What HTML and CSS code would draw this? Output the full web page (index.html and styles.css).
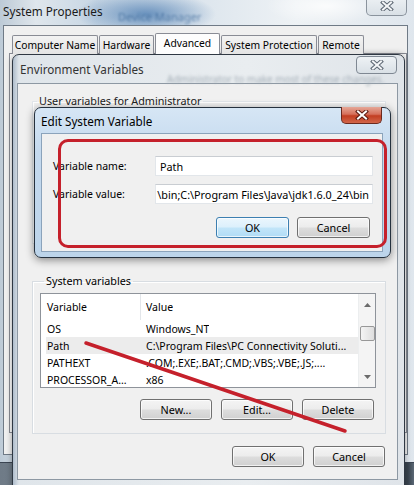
FILE: index.html
```html
<!DOCTYPE html>
<html>
<head>
<meta charset="utf-8">
<link rel="stylesheet" href="styles.css">
</head>
<body>
<div class="desktop">
  <div class="win win-sys">
    <div class="titlebar">
      <span class="blur-text blur-dm">Device Manager</span>
      <span class="title">System Properties</span>
      <span class="close close-sys">
        <svg width="14" height="10" viewBox="0 0 14 10"><path d="M3 1.5 L11 8.5 M11 1.5 L3 8.5" stroke="#5d6773" stroke-width="4" stroke-linecap="square"/><path d="M3 1.5 L11 8.5 M11 1.5 L3 8.5" stroke="#f4f6f8" stroke-width="2" stroke-linecap="square"/></svg>
      </span>
    </div>
    <div class="client sys-client">
      <div class="tabs">
        <div class="tab t1">Computer Name</div>
        <div class="tab t2">Hardware</div>
        <div class="tab t3 active">Advanced</div>
        <div class="tab t4">System Protection</div>
        <div class="tab t5">Remote</div>
      </div>
      <div class="tabpage"></div>
    </div>
  </div>

  <div class="win win-env">
    <div class="titlebar">
      <span class="title">Environment Variables</span>
      <span class="blur-text blur-admin">Administrator to make most of these changes.</span>
      <span class="close close-env">
        <svg width="14" height="10" viewBox="0 0 14 10"><path d="M3 1.5 L11 8.5 M11 1.5 L3 8.5" stroke="#5d6773" stroke-width="4" stroke-linecap="square"/><path d="M3 1.5 L11 8.5 M11 1.5 L3 8.5" stroke="#f4f6f8" stroke-width="2" stroke-linecap="square"/></svg>
      </span>
    </div>
    <div class="client env-client">
      <fieldset class="group group-user">
        <legend>User variables for Administrator</legend>
      </fieldset>
      <fieldset class="group group-sys">
        <legend>System variables</legend>
        <div class="listbox">
          <div class="list-main">
            <div class="lrow lhead"><span class="c1">Variable</span><span class="c2">Value</span></div>
            <div class="lrow"><span class="c1">OS</span><span class="c2">Windows_NT</span></div>
            <div class="lrow sel"><span class="c1">Path</span><span class="c2">C:\Program Files\PC Connectivity Soluti...</span></div>
            <div class="lrow"><span class="c1">PATHEXT</span><span class="c2">.COM;.EXE;.BAT;.CMD;.VBS;.VBE;.JS;....</span></div>
            <div class="lrow"><span class="c1">PROCESSOR_A...</span><span class="c2">x86</span></div>
          </div>
          <div class="vscroll">
            <svg class="arrow" width="7" height="4" viewBox="0 0 7 4"><path d="M0 4 L3.5 0 L7 4 Z" fill="#6b6b6b"/></svg>
            <div class="thumb"></div>
            <svg class="arrow arrow-down" width="7" height="4" viewBox="0 0 7 4"><path d="M0 0 L3.5 4 L7 0 Z" fill="#6b6b6b"/></svg>
          </div>
        </div>
        <div class="btnrow">
          <div class="btn">New...</div>
          <div class="btn">Edit...</div>
          <div class="btn">Delete</div>
        </div>
      </fieldset>
      <div class="btnrow dlg-btns">
        <div class="btn">OK</div>
        <div class="btn">Cancel</div>
      </div>
    </div>
  </div>

  <div class="win win-edit">
    <div class="titlebar">
      <span class="title">Edit System Variable</span>
      <span class="close close-red">
        <svg width="14" height="10" viewBox="0 0 14 10"><path d="M3 1.5 L11 8.5 M11 1.5 L3 8.5" stroke="#5a1a12" stroke-width="4" stroke-linecap="square"/><path d="M3 1.5 L11 8.5 M11 1.5 L3 8.5" stroke="#ffffff" stroke-width="2" stroke-linecap="square"/></svg>
      </span>
    </div>
    <div class="client edit-client">
      <div class="form">
        <label class="lbl">Variable name:</label>
        <div class="field">Path</div>
        <label class="lbl">Variable value:</label>
        <div class="field field-value"><span>\bin;C:\Program Files\Java\jdk1.6.0_24\bin</span></div>
      </div>
      <div class="btnrow edit-btns">
        <div class="btn btn-default">OK</div>
        <div class="btn">Cancel</div>
      </div>
    </div>
  </div>

  <div class="annot-rect"></div>
  <svg class="annot-line" width="414" height="485" viewBox="0 0 414 485">
    <line x1="86" y1="343" x2="345" y2="431" stroke="#c5202b" stroke-width="3.5" stroke-linecap="round"/>
  </svg>
</div>
</body>
</html>
```

FILE: styles.css
```css
* { box-sizing: border-box; }
html, body { margin: 0; padding: 0; }
body {
  font-family: "Noto Sans", "Open Sans", sans-serif;
  font-size: 10.5px;
  color: #000;
}
.desktop {
  position: relative;
  width: 414px;
  height: 485px;
  overflow: hidden;
  background: linear-gradient(90deg, #6f7b87 0px, #76828e 85px, #5aa96a 85px, #62b070 280px, #7b8691 280px, #39444f 408px, #5b6875 414px);
}

/* generic window */
.win {
  position: absolute;
  display: flex;
  flex-direction: column;
  border: 1px solid #3b4552;
  border-radius: 7px 7px 0 0;
}
.titlebar {
  display: flex;
  align-items: center;
  position: relative;
  flex: none;
}
.title {
  font-family: "Noto Sans", "Open Sans", sans-serif;
  font-size: 11.7px;
  color: #000;
  white-space: nowrap;
  position: relative;
}
.close {
  margin-left: auto;
  align-self: flex-start;
  display: flex;
  align-items: center;
  justify-content: center;
  width: 41px;
  border: 1px solid #7f8893;
  border-top: none;
  border-radius: 0 0 5px 5px;
  background: linear-gradient(#eef2f5, #d9e0e6);
}
.blur-text {
  position: absolute;
  white-space: nowrap;
  filter: blur(1.2px);
  pointer-events: none;
}
.client {
  border: 1px solid #7d8893;
  background: #f0f0f0;
  flex: 1;
}

/* System properties */
.win-sys {
  left: -5px;
  top: -5px;
  width: 421px;
  height: 468px;
  padding: 0 7px 7px 7px;
  background:
    radial-gradient(ellipse 70px 22px at 150px 18px, rgba(70,120,175,0.75), rgba(70,120,175,0) 100%),
    radial-gradient(ellipse 60px 18px at 330px 10px, rgba(255,255,255,0.8), rgba(255,255,255,0) 100%),
    linear-gradient(90deg, #b9c7d4 0px, #dfe6ec 40px, #c7d6e4 100px, #dce5ed 200px, #eef2f5 300px, #dfe6ed 420px);
}
.win-sys .titlebar { height: 29px; }
.win-sys .title { color: #1a1a1a; top: 0; }
.blur-dm { left: 115px; top: 13px; font-size: 11px; color: #3e6a9a; opacity: 0.7; }
.close-sys { height: 20px; margin-right: 1px; border-color: #8a939d; }
.sys-client { border-color: #6f7a86; }
.tabs {
  display: flex;
  align-items: flex-end;
  gap: 1px;
  margin: 7px 0 0 8px;
  height: 21px;
  position: relative;
  z-index: 1;
}
.tab {
  height: 19px;
  border: 1px solid #898c95;
  border-bottom: none;
  border-radius: 2px 2px 0 0;
  background: linear-gradient(#f3f3f3, #e4e4e4);
  display: flex;
  align-items: center;
  justify-content: center;
  white-space: nowrap;
  font-size: 10.3px;
}
.tab.active {
  height: 21px;
  background: #fdfdfd;
  padding-bottom: 3px;
}
.t1 { width: 86px; }
.t2 { width: 55px; }
.t3 { width: 65px; }
.t4 { width: 96px; }
.t5 { width: 46px; }
.tabpage {
  margin: -1px 0 0 5px;
  height: 380px;
  border: 1px solid #898c95;
  background: #fcfcfc;
}

/* Environment variables */
.win-env {
  left: 12px;
  top: 54px;
  width: 393px;
  height: 440px;
  padding: 0 6px 6px 4px;
  border-color: #2f3843;
  background:
    linear-gradient(90deg, #aebccb 0px, #dfe5ea 6px, #e9edf0 60%, #dfe4e9 100%);
  box-shadow: 0 0 6px rgba(0,0,0,0.35);
}
.win-env .titlebar { height: 28px; }
.win-env .title { left: 3px; color: #333; }
.blur-admin { left: 150px; top: 17px; font-size: 10px; color: #a3adb6; filter: blur(1.4px); }
.close-env { height: 18px; margin-right: 1px; margin-top: 1px; border-top: 1px solid #7f8893; border-radius: 4px; }
.env-client {
  flex: none;
  height: 397px;
  padding: 0 11px 0 14px;
  border-color: #8d98a3;
}
.group {
  margin: 0;
  border: 1px solid #d8dde2;
  box-shadow: inset 1px 1px 0 #fff;
  padding: 0;
  min-width: 0;
}
.group legend {
  padding: 0 2px;
  margin-left: 4px;
  line-height: 14px;
  font-size: 10.8px;
}
.group-user {
  margin-top: 10px;
  height: 150px;
  border-color: #e2e6ea;
}
.group-user legend { color: #222; }
.group-sys {
  margin-top: 30px;
  height: 160px;
  padding: 5px 9px 0 7px;
}
.listbox {
  height: 95px;
  border: 1px solid #8e939a;
  background: #fff;
  display: flex;
}
.list-main { flex: 1; min-width: 0; }
.lrow {
  display: flex;
  height: 17px;
  align-items: center;
  white-space: nowrap;
}
.lrow.lhead {
  height: 26px;
  margin-bottom: 0;
}
.lhead .c1 { border-right: 1px solid #e3e6ea; align-self: stretch; display: flex; align-items: center; }
.c1 { width: 100px; padding-left: 6px; flex: none; overflow: hidden; }
.c2 { padding-left: 5px; overflow: hidden; }
.lrow.sel { background: #ececec; margin-left: 5px; }
.lrow.sel .c1 { width: 95px; padding-left: 1px; }
.vscroll {
  width: 17px;
  flex: none;
  background: #f4f4f4;
  border-left: 1px solid #eceeef;
  display: flex;
  flex-direction: column;
  align-items: center;
  padding: 9px 0 8px;
}
.thumb {
  width: 15px;
  height: 15px;
  margin-top: 19px;
  border: 1px solid #989898;
  border-radius: 2px;
  background: linear-gradient(90deg, #f4f4f4, #dedede);
}
.arrow-down { margin-top: auto; }
.btnrow {
  display: flex;
  justify-content: flex-end;
  gap: 9px;
}
.group-sys .btnrow { margin-top: 11px; padding-right: 2px; }
.btn {
  width: 72px;
  height: 21px;
  border: 1px solid #707070;
  border-radius: 3px;
  background: linear-gradient(#f4f4f4 0%, #ececec 48%, #dddddd 52%, #d0d0d0 100%);
  display: flex;
  align-items: center;
  justify-content: center;
  box-shadow: inset 0 0 0 1px rgba(255,255,255,0.7);
  white-space: nowrap;
  font-size: 10.8px;
}
.dlg-btns { margin-top: 12px; padding-right: 1px; }

/* Edit System Variable */
.win-edit {
  left: 34px;
  top: 107px;
  width: 357px;
  height: 151px;
  padding: 0 7px 5px 6px;
  border-color: #25313e;
  border-radius: 7px;
  background: linear-gradient(#d6e6f5 0%, #c4d9ee 30%, #bcd4ea 100%);
  box-shadow: 0 2px 8px rgba(0,0,0,0.45);
}
.win-edit .titlebar { height: 25px; }
.close-red {
  height: 17px;
  margin-right: 1px;
  margin-top: -1px;
  border: 1px solid #6b2a1f;
  border-top: none;
  background: linear-gradient(#e5a797 0%, #d6705b 45%, #c23e22 55%, #d2664a 100%);
}
.edit-client {
  border-color: #8ba3bb;
  padding: 22px 10px 0 11px;
}
.form {
  display: grid;
  grid-template-columns: 102px 218px;
  grid-auto-rows: 20px;
  row-gap: 8px;
  align-items: center;
}
.lbl { font-size: 10.5px; }
.field {
  height: 20px;
  border: 1px solid #e2e6ea;
  border-top-color: #c9cdd2;
  background: #fff;
  display: flex;
  align-items: center;
  padding: 0 4px;
  font-size: 10.8px;
  white-space: nowrap;
  overflow: hidden;
}
.field-value { justify-content: flex-end; padding: 0 3px 0 2px; }
.edit-btns { margin-top: 13px; gap: 8px; padding-right: 2px; }
.edit-btns .btn { width: 73px; height: 21px; }
.btn-default {
  border-color: #3c7fb1;
  background: linear-gradient(#ebf6fd 0%, #dcf0fc 48%, #c2e5f9 52%, #b0dcf5 100%);
}

/* annotations */
.annot-rect {
  position: absolute;
  left: 58px;
  top: 139px;
  width: 329px;
  height: 109px;
  border: 3px solid #c5202b;
  border-radius: 10px;
}
.annot-line {
  position: absolute;
  left: 0;
  top: 0;
}
```
